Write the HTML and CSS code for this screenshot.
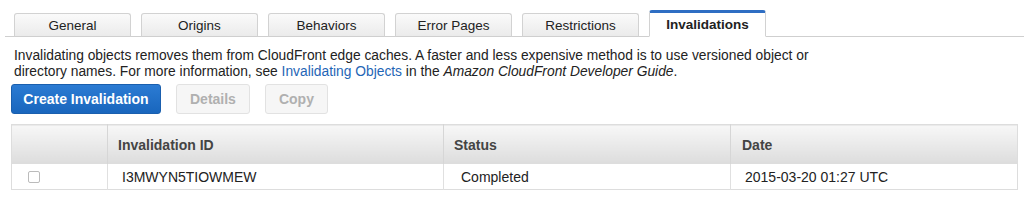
FILE: index.html
```html
<!DOCTYPE html>
<html lang="en">
<head>
  <meta charset="UTF-8">
  <title>CloudFront Distribution - Invalidations</title>
  <link rel="stylesheet" href="styles.css">
</head>
<body>
  <div class="tabs">
    <div class="tab">General</div>
    <div class="tab">Origins</div>
    <div class="tab">Behaviors</div>
    <div class="tab">Error Pages</div>
    <div class="tab">Restrictions</div>
    <div class="tab active">Invalidations</div>
  </div>

  <p class="intro">
    Invalidating objects removes them from CloudFront edge caches. A faster and less expensive method is to use versioned object or<br>
    directory names. For more information, see <a href="#">Invalidating Objects</a> in the <em>Amazon CloudFront Developer Guide</em>.
  </p>

  <div class="actions">
    <button class="btn primary">Create Invalidation</button>
    <button class="btn" disabled>Details</button>
    <button class="btn" disabled>Copy</button>
  </div>

  <table class="grid">
    <colgroup>
      <col class="c-sel">
      <col class="c-id">
      <col class="c-status">
      <col>
    </colgroup>
    <thead>
      <tr>
        <th class="sel"></th>
        <th>Invalidation ID</th>
        <th>Status</th>
        <th class="date">Date</th>
      </tr>
    </thead>
    <tbody>
      <tr>
        <td class="sel"><span class="check"></span></td>
        <td>I3MWYN5TIOWMEW</td>
        <td class="status">Completed</td>
        <td>2015-03-20 01:27 UTC</td>
      </tr>
    </tbody>
  </table>
</body>
</html>
```

FILE: styles.css
```css
html, body {
  margin: 0;
  background: #fff;
  font-family: "Liberation Sans", Arial, sans-serif;
  font-size: 14px;
  color: #222;
}

.tabs {
  display: flex;
  align-items: flex-end;
  margin-left: 5px;
  padding: 10px 0 0 9px;
  border-bottom: 1px solid #cfcfcf;
  height: 26px;
}

.tab {
  width: 115px;
  height: 22px;
  line-height: 24px;
  margin-right: 10px;
  margin-bottom: -1px;
  text-align: center;
  font-size: 13.5px;
  color: #222;
  background: linear-gradient(#fafafa, #ebebeb);
  border: 1px solid #d2d2d2;
  border-bottom-color: #cfcfcf;
  border-radius: 3px 3px 0 0;
}

.tab.active {
  height: 23px;
  line-height: 23px;
  background: #fff;
  border-top: 3px solid #2e6ec3;
  border-bottom-color: #fff;
  font-weight: bold;
}

.intro {
  margin: 11px 0 0 14px;
  line-height: 15.5px;
  font-size: 13.8px;
  color: #222;
}

.intro a {
  color: #1f66b6;
  text-decoration: none;
}

.actions {
  display: flex;
  gap: 15px;
  margin: 5px 0 0 11px;
}

.btn {
  height: 30px;
  padding: 0 13px;
  font-family: inherit;
  font-size: 14px;
  font-weight: bold;
  color: #b0b0b0;
  background: #f6f6f6;
  border: 1px solid #e2e2e2;
  border-radius: 3px;
}

.btn.primary {
  width: 150px;
  padding: 0;
  color: #fff;
  background: linear-gradient(#2b7bd3, #1966bd);
  border: 1px solid #1a5fae;
}

.grid {
  margin: 10px 0 0 11px;
  width: 1007px;
  table-layout: fixed;
  border-collapse: collapse;
  border: 1px solid #ddd;
}

.c-sel { width: 96px; }
.c-id { width: 336px; }
.c-status { width: 287px; }

.grid th {
  height: 39px;
  padding: 0 0 0 10px;
  text-align: left;
  font-size: 14px;
  color: #444;
  background: linear-gradient(#f7f7f7, #dcdcdc);
  border-left: 1px solid #d6d6d6;
}

.grid th.date {
  padding-left: 11px;
}

.grid td {
  height: 25px;
  padding: 0 0 0 14px;
  font-size: 14px;
  color: #222;
  border-left: 1px solid #e0e0e0;
}

.grid td.status {
  padding-left: 17px;
}

.grid .sel {
  border-left: none;
  padding-left: 16px;
}

.check {
  display: block;
  width: 10px;
  height: 10px;
  border: 1px solid #bbb;
  border-radius: 2px;
  background: #fff;
}
```
